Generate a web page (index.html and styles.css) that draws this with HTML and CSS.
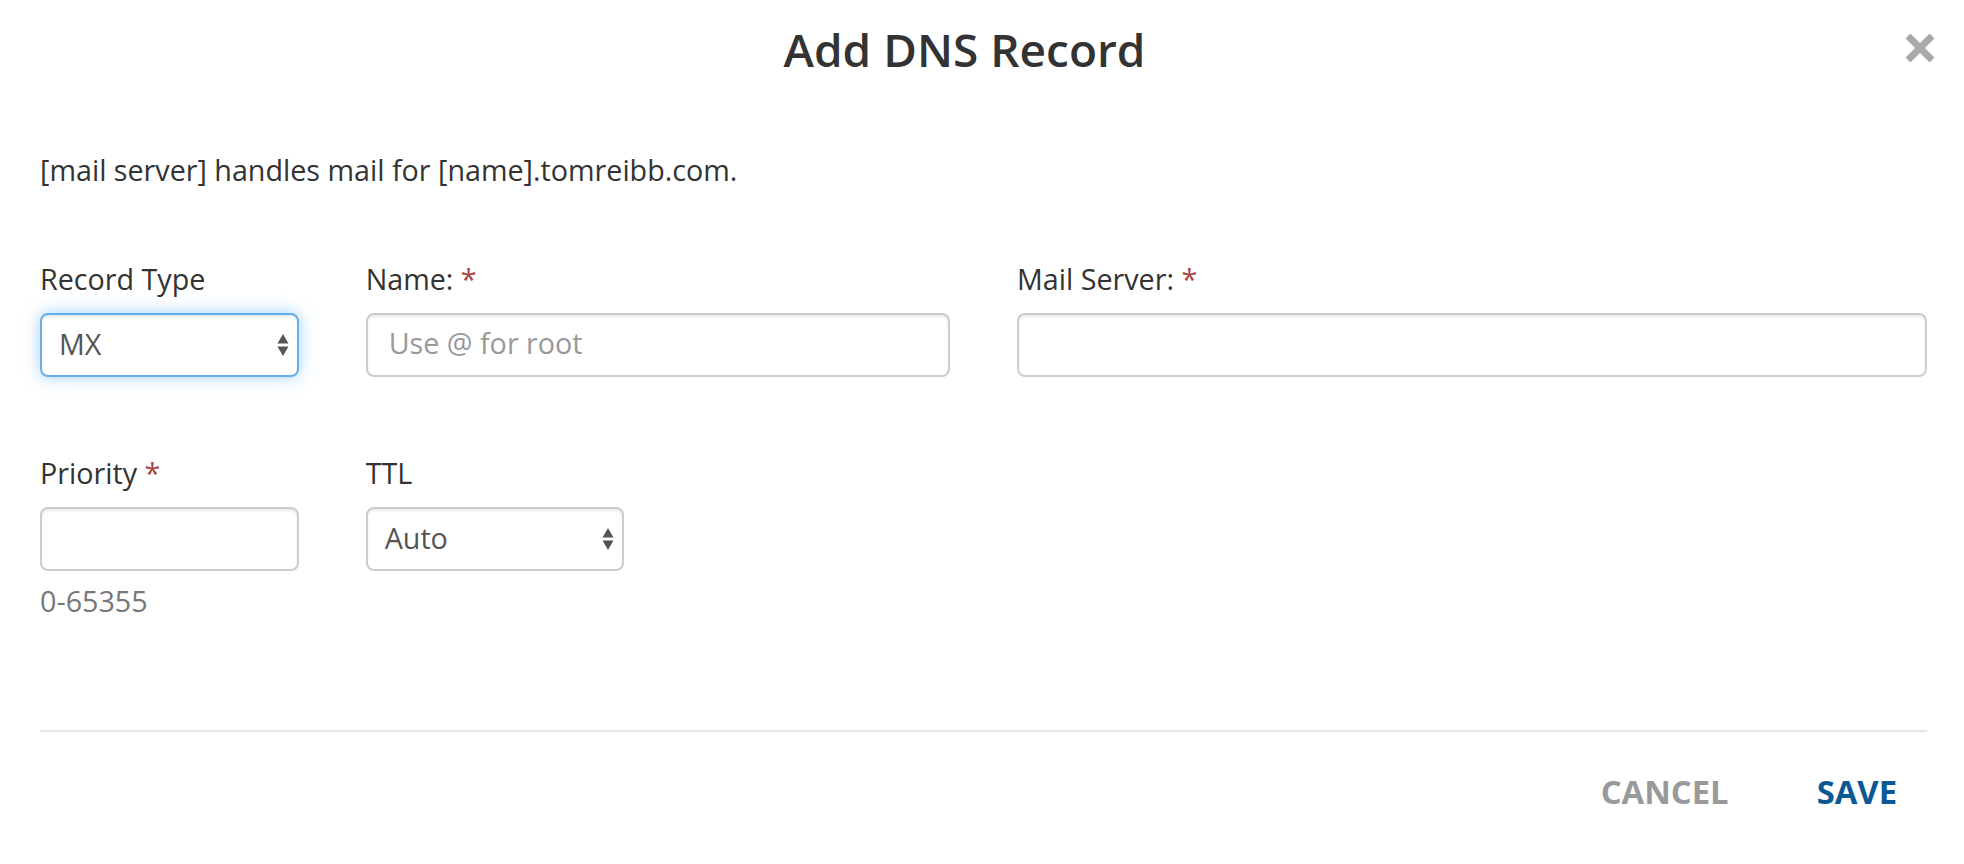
FILE: index.html
```html
<!DOCTYPE html>
<html lang="en">
<head>
  <meta charset="UTF-8">
  <title>Add DNS Record</title>
  <link rel="stylesheet" href="styles.css">
</head>
<body>

  <div class="modal">
    <div class="modal-header">
      <h2 class="modal-title">Add DNS Record</h2>
      <button type="button" class="close" aria-label="Close">
        <svg width="28" height="28" viewBox="0 0 28 28">
          <path d="M2 2 L26 26 M26 2 L2 26" stroke="#a9a9a9" stroke-width="7" fill="none"/>
        </svg>
      </button>
    </div>

    <div class="modal-body">
      <p class="help-line">[mail server] handles mail for [name].tomreibb.com.</p>

      <div class="form-row">
        <div class="field span-2">
          <label for="recordType">Record Type</label>
          <div class="select-wrap">
            <select id="recordType" class="form-control focused">
              <option>MX</option>
              <option>A</option>
              <option>CNAME</option>
              <option>TXT</option>
            </select>
            <span class="select-arrows"><svg width="12" height="24" viewBox="0 0 12 24"><path d="M6 1 L11.5 10.5 L0.5 10.5 Z M0.5 13.5 L11.5 13.5 L6 23 Z" fill="#555"/></svg></span>
          </div>
        </div>
        <div class="field span-4">
          <label for="name">Name: <span class="req">*</span></label>
          <input type="text" id="name" class="form-control" placeholder="Use @ for root">
        </div>
        <div class="field span-6">
          <label for="mailServer">Mail Server: <span class="req">*</span></label>
          <input type="text" id="mailServer" class="form-control">
        </div>
      </div>

      <div class="form-row second">
        <div class="field span-2">
          <label for="priority">Priority <span class="req">*</span></label>
          <input type="text" id="priority" class="form-control">
          <div class="hint">0-65355</div>
        </div>
        <div class="field span-2">
          <label for="ttl">TTL</label>
          <div class="select-wrap">
            <select id="ttl" class="form-control">
              <option>Auto</option>
              <option>1 hour</option>
              <option>1 day</option>
            </select>
            <span class="select-arrows"><svg width="12" height="24" viewBox="0 0 12 24"><path d="M6 1 L11.5 10.5 L0.5 10.5 Z M0.5 13.5 L11.5 13.5 L6 23 Z" fill="#555"/></svg></span>
          </div>
        </div>
      </div>
    </div>

    <div class="modal-footer">
      <button type="button" class="btn btn-cancel">CANCEL</button>
      <button type="button" class="btn btn-save">SAVE</button>
    </div>
  </div>

</body>
</html>
```

FILE: styles.css
```css
/* Add DNS record dialog */
body {
  margin: 0;
  font-family: "Open Sans", "Noto Sans", sans-serif;
  color: #333;
  background-color: #fff;
}

.modal {
  padding: 0 37px 0 40px;
}

.modal-header {
  display: flex;
  align-items: flex-start;
  padding-top: 15px;
}

.modal-title {
  flex: 1;
  margin: 0;
  font-size: 46px;
  font-weight: 600;
  line-height: 68px;
  text-align: center;
  color: #333;
}

.close {
  margin: 19px -7px 0 17px;
  padding: 0;
  border: none;
  background: none;
  cursor: pointer;
}

.close svg {
  display: block;
}

.modal-body {
  padding-top: 67px;
}

.help-line {
  margin: 0;
  font-size: 28.7px;
  line-height: 40px;
}

.form-row {
  display: grid;
  grid-template-columns: repeat(12, 1fr);
  column-gap: 67px;
  margin-top: 69px;
}

.form-row.second {
  margin-top: 76px;
}

.span-2 { grid-column: span 2; }
.span-4 { grid-column: span 4; }
.span-6 { grid-column: span 6; }

label {
  display: block;
  font-size: 28.7px;
  line-height: 40px;
  color: #333;
  margin-bottom: 14px;
}

.req {
  color: #a94442;
}

.form-control {
  display: block;
  box-sizing: border-box;
  width: 100%;
  height: 64px;
  padding: 0 21px 5px;
  font-family: inherit;
  font-size: 28.7px;
  color: #555;
  background-color: #fff;
  border: 2px solid #ccc;
  border-radius: 8px;
  box-shadow: inset 0 2px 2px rgba(0, 0, 0, 0.075);
  outline: none;
}

.form-control::placeholder {
  color: #999;
}

.select-wrap {
  position: relative;
}

select.form-control {
  -webkit-appearance: none;
  appearance: none;
  padding: 0 17px 4px;
}

select.focused {
  border-color: #66afe9;
  box-shadow: inset 0 2px 2px rgba(0, 0, 0, 0.075), 0 0 16px rgba(102, 175, 233, 0.6);
}

.select-arrows {
  position: absolute;
  right: 10px;
  top: 20px;
  pointer-events: none;
}

.select-arrows svg {
  display: block;
}

.hint {
  margin-top: 10px;
  font-size: 28.7px;
  line-height: 40px;
  color: #777;
}

.modal-footer {
  display: flex;
  justify-content: flex-end;
  gap: 24px;
  margin-top: 109px;
  padding-top: 26px;
  border-top: 2px solid #e3e6ea;
}

.btn {
  padding: 12px 32px;
  font-family: inherit;
  font-size: 32.8px;
  font-weight: 700;
  line-height: 44px;
  border: none;
  background: none;
  cursor: pointer;
}

.btn-cancel {
  color: #999;
}

.btn-save {
  padding-right: 30px;
  color: #0a5894;
}
```
